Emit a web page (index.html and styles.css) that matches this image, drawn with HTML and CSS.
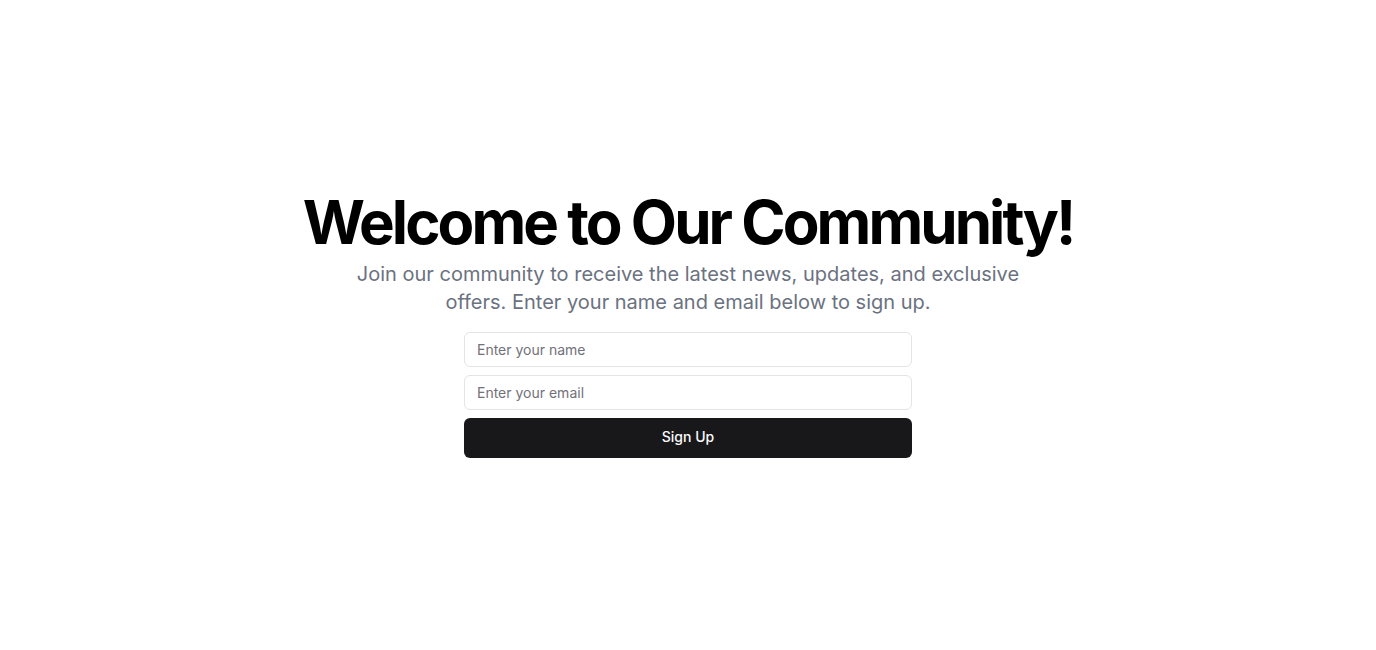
FILE: index.html
```html
<!DOCTYPE html>
<html lang="en">
<head>
<meta charset="utf-8">
<title>Welcome</title>
<link rel="stylesheet" href="styles.css">
</head>
<body>
<main class="page">
  <section class="hero">
    <div class="intro">
      <h1 class="title">Welcome to Our Community!</h1>
      <p class="lead">Join our community to receive the latest news, updates, and exclusive offers. Enter your name and email below to sign up.</p>
    </div>
    <form class="form">
      <input class="input" type="text" placeholder="Enter your name">
      <input class="input" type="email" placeholder="Enter your email">
      <button class="button" type="button">Sign Up</button>
    </form>
  </section>
</main>
</body>
</html>
```
FILE: styles.css
```css
* { box-sizing: border-box; }
html, body { margin: 0; padding: 0; background: #fff; }
body { font-family: Inter, "Noto Sans", sans-serif; color: #09090b; }
.page {
  min-height: 650px;
  display: flex;
  align-items: center;
  justify-content: center;
}
.hero {
  display: flex;
  flex-direction: column;
  align-items: center;
  gap: 16px;
  text-align: center;
}
.intro {
  display: flex;
  flex-direction: column;
  align-items: center;
  gap: 8px;
}
.title {
  margin: 0;
  font-size: 60px;
  line-height: 1;
  font-weight: 700;
  letter-spacing: -0.049em;
  color: #000;
}
.lead {
  margin: 0;
  max-width: 700px;
  font-size: 20px;
  line-height: 28px;
  color: #6b7280;
}
.form {
  width: 448px;
  display: flex;
  flex-direction: column;
  gap: 8px;
}
.input {
  height: 35px;
  width: 100%;
  padding: 0 12px;
  border: 1px solid #e4e4e7;
  border-radius: 6px;
  font-family: Inter, sans-serif;
  font-size: 14px;
  color: #09090b;
  background: #fff;
  outline: none;
}
.input::placeholder { color: #71717a; }
.button {
  height: 40px;
  width: 100%;
  padding: 0 16px 2px;
  border: 0;
  border-radius: 6px;
  background: #18181b;
  color: #fafafa;
  font-family: Inter, sans-serif;
  font-size: 14px;
  line-height: 20px;
  font-weight: 500;
}
```
